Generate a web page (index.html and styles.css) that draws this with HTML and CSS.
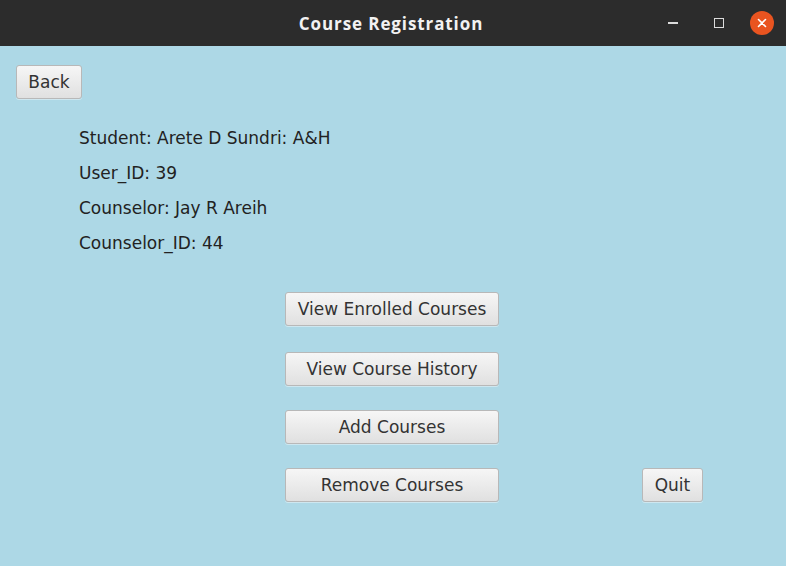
FILE: index.html
```html
<!DOCTYPE html>
<html>
<head>
<meta charset="utf-8">
<link rel="stylesheet" href="styles.css">
</head>
<body>
<div class="window">
  <header class="titlebar">
    <span class="title">Course Registration</span>
    <div class="controls">
      <span class="ctl min"></span>
      <span class="ctl max"></span>
      <span class="ctl close">
        <svg width="10" height="10" viewBox="0 0 10 10"><path d="M1.5 1.5L8.5 8.5M8.5 1.5L1.5 8.5" stroke="#fff" stroke-width="1.6" stroke-linecap="round"/></svg>
      </span>
    </div>
  </header>
  <main class="content">
    <button class="btn back">Back</button>
    <div class="info">
      <div class="label">Student: Arete D Sundri: A&amp;H</div>
      <div class="label">User_ID: 39</div>
      <div class="label">Counselor: Jay R Areih</div>
      <div class="label">Counselor_ID: 44</div>
    </div>
    <div class="actions">
      <div class="row r1"><button class="btn wide">View Enrolled Courses</button></div>
      <div class="row r2"><button class="btn wide">View Course History</button></div>
      <div class="row r3"><button class="btn wide">Add Courses</button></div>
      <div class="row r4"><button class="btn wide">Remove Courses</button><button class="btn quit">Quit</button></div>
    </div>
  </main>
</div>
</body>
</html>
```
FILE: styles.css
```css
html, body {
  margin: 0;
  padding: 0;
  width: 786px;
  height: 566px;
  overflow: hidden;
  background: #add8e6;
}
.window {
  display: flex;
  flex-direction: column;
  height: 566px;
}
.titlebar {
  position: relative;
  height: 46px;
  background: #2c2c2c;
  display: flex;
  align-items: center;
  justify-content: center;
  flex-shrink: 0;
}
.title {
  color: #f2f2f2;
  font-family: "Open Sans", "DejaVu Sans", sans-serif;
  font-weight: 700;
  font-size: 17px;
  letter-spacing: 0.9px;
  margin-left: -4px;
}
.controls {
  position: absolute;
  right: 12px;
  top: 0;
  height: 46px;
  display: flex;
  align-items: center;
}
.ctl {
  display: flex;
  align-items: center;
  justify-content: center;
}
.min {
  width: 10px;
  height: 2px;
  background: #dcdcdc;
  margin-right: 36px;
  margin-top: 0;
}
.max {
  border: 1.5px solid #dcdcdc;
  box-sizing: border-box;
  width: 10px;
  height: 10px;
  margin-right: 26px;
}
.close {
  width: 24px;
  height: 24px;
  border-radius: 50%;
  background: #e95420;
}
.content {
  flex: 1;
  padding: 19px 0 0 16px;
  font-family: "DejaVu Sans", sans-serif;
  color: #222;
}
.btn {
  font-family: "DejaVu Sans", sans-serif;
  font-size: 17px;
  color: #333;
  background: linear-gradient(#f6f6f6, #e0e0e0);
  border: 1px solid #b8b8b8;
  border-radius: 3px;
  box-shadow: 0 1px 0 rgba(255,255,255,0.4);
  padding: 0;
  height: 34px;
  display: flex;
  align-items: center;
  justify-content: center;
}
.back {
  width: 66px;
  font-size: 17px;
}
.info {
  margin-left: 63px;
  margin-top: 22px;
}
.label {
  height: 35px;
  line-height: 35px;
  font-size: 17px;
}
.actions {
  margin-left: 269px;
  margin-top: 31px;
  display: flex;
  flex-direction: column;
}
.row {
  display: flex;
  align-items: center;
}
.r2 { margin-top: 26px; }
.r3 { margin-top: 24px; }
.r4 { margin-top: 24px; }
.wide {
  width: 214px;
}
.quit {
  width: 61px;
  margin-left: 143px;
}
```
